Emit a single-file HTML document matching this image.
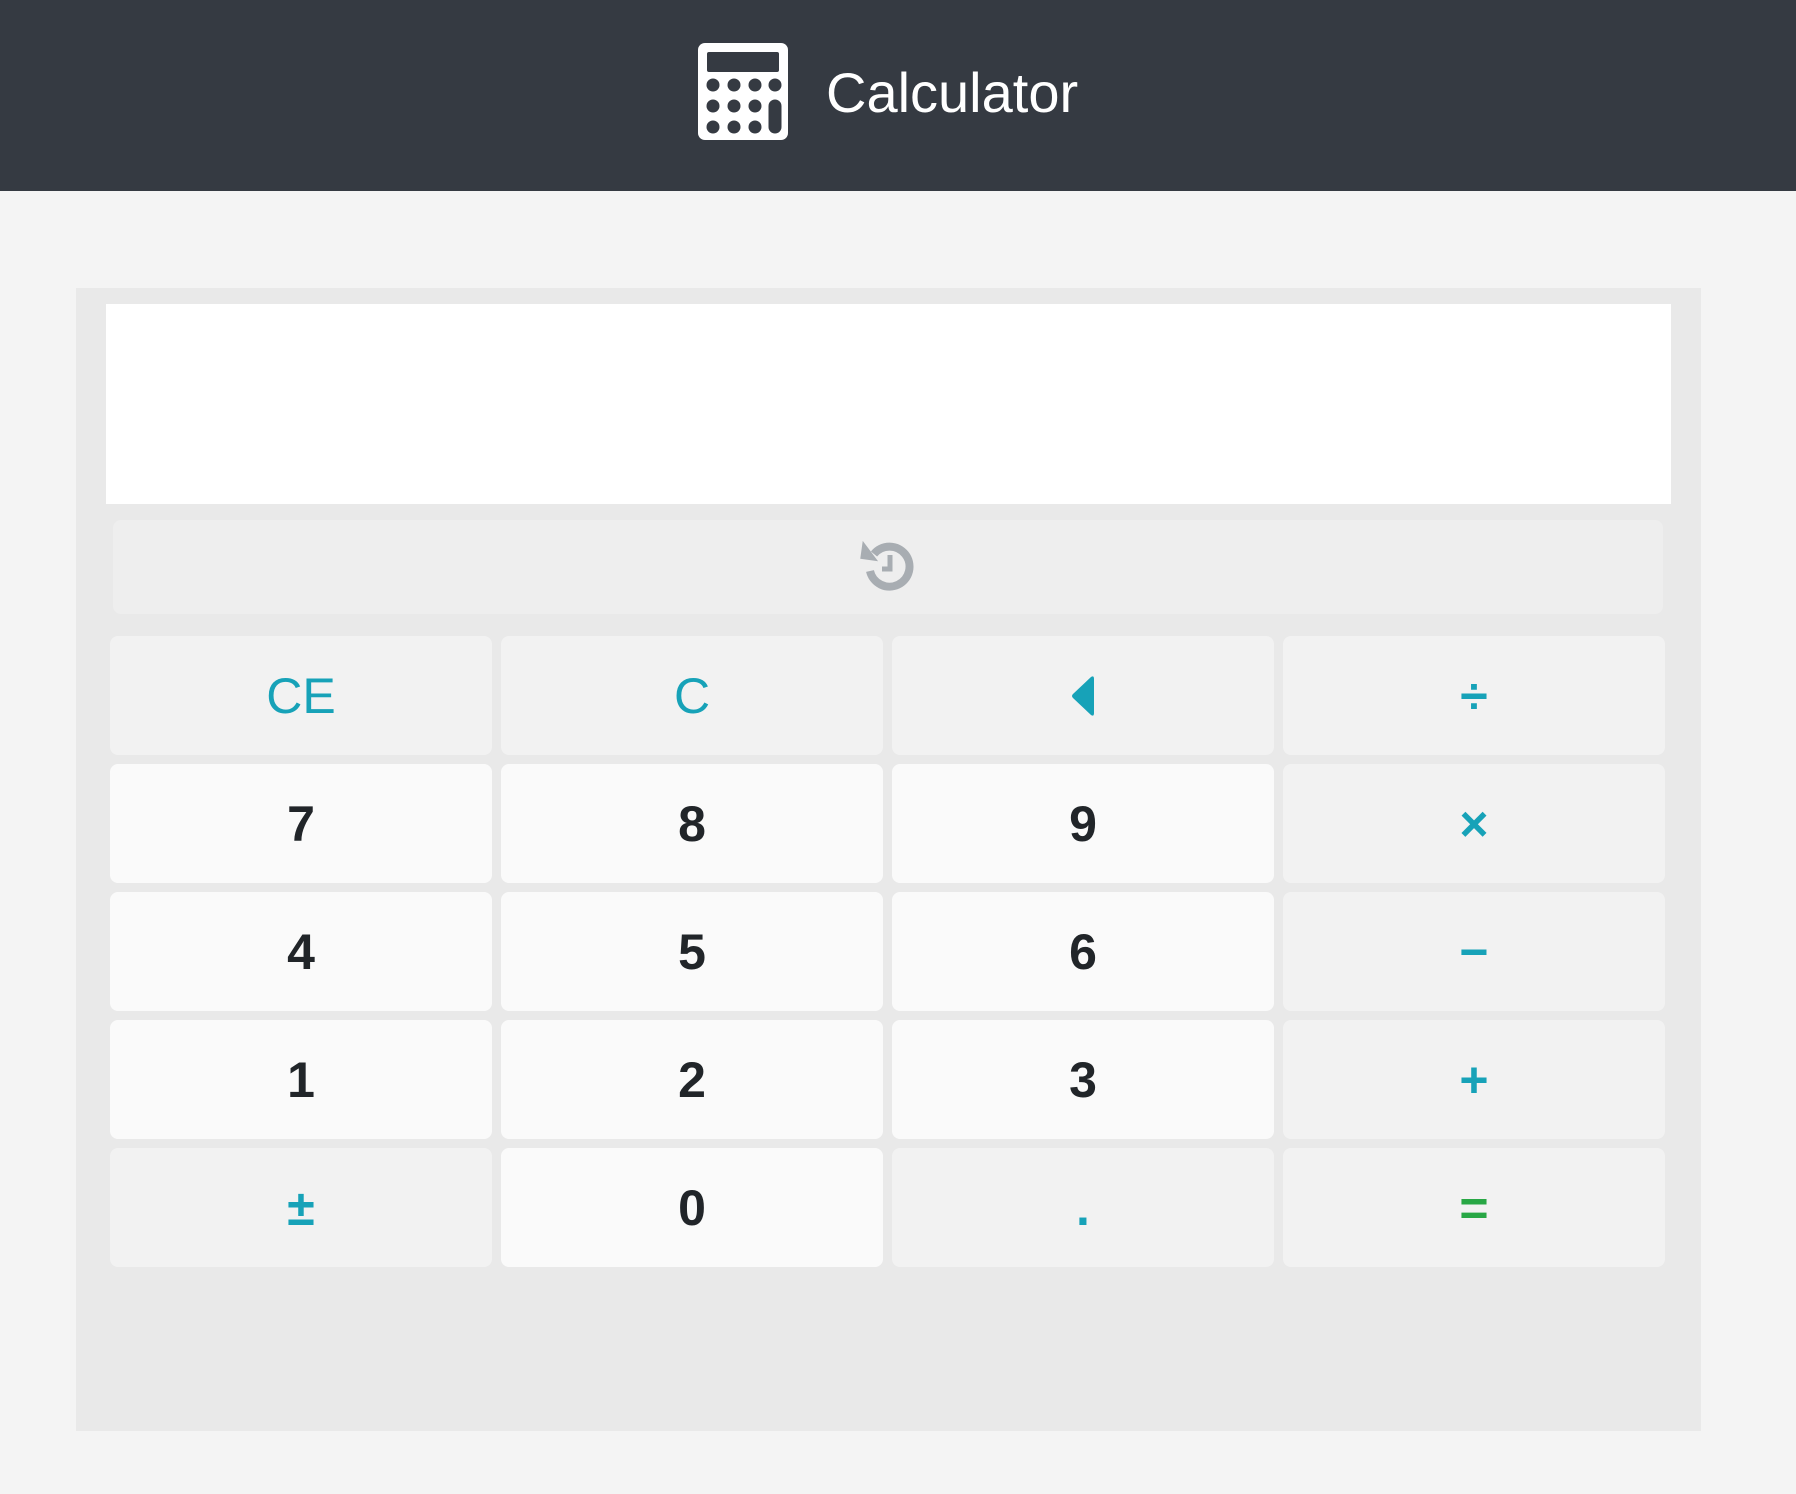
<!DOCTYPE html>
<html><head><meta charset="utf-8"><style>
*{margin:0;padding:0;box-sizing:border-box}
body{width:1796px;height:1494px;background:#f4f4f4;font-family:"Liberation Sans",Arial,sans-serif;position:relative;overflow:hidden}
.hdr{position:absolute;left:0;top:0;width:1796px;height:191px;background:#353a42}
.title{position:absolute;left:826px;top:58px;font-size:56px;color:#fff;line-height:70px}
.panel{position:absolute;left:76px;top:288px;width:1625px;height:1143px;background:#e9e9e9}
.disp{position:absolute;left:106px;top:304px;width:1565px;height:200px;background:#fff}
.hist{position:absolute;left:113px;top:520px;width:1550px;height:94px;background:#eeeeee;border-radius:8px}
.b{position:absolute;width:382px;height:119px;border-radius:8px;background:#f2f2f2;display:flex;align-items:center;justify-content:center;font-size:50px;color:#17a2b8}
.d{background:#fafafa;color:#212529;font-weight:bold}
.o{font-weight:bold}
</style></head><body>
<div class="hdr">
<svg style="position:absolute;left:698px;top:43px" width="90" height="97" viewBox="0 0 90 97">
<rect x="0" y="0" width="90" height="97" rx="7" fill="#fff"/>
<rect x="9" y="9" width="72" height="20" rx="2" fill="#353a42"/>
<g fill="#353a42">
<circle cx="15" cy="42" r="6.5"/><circle cx="36" cy="42" r="6.5"/><circle cx="57" cy="42" r="6.5"/><circle cx="77" cy="42" r="6.5"/>
<circle cx="15" cy="63" r="6.5"/><circle cx="36" cy="63" r="6.5"/><circle cx="57" cy="63" r="6.5"/>
<circle cx="15" cy="84" r="6.5"/><circle cx="36" cy="84" r="6.5"/><circle cx="57" cy="84" r="6.5"/>
<rect x="70.5" y="56.5" width="13" height="34" rx="6.5"/>
</g></svg>
<div class="title">Calculator</div>
</div>
<div class="panel"></div>
<div class="disp"></div>
<div class="hist">
<svg style="position:absolute;left:747px;top:18px" width="58" height="58" viewBox="0 0 58 58">
<path d="M10 33 A20 20 0 1 0 14 16" fill="none" stroke="#a8adb2" stroke-width="8"/>
<path d="M1 4 L1 22 L19 22 Z" fill="#a8adb2" transform="rotate(8 10 16)"/>
<path d="M30 17 V31 H22" fill="none" stroke="#a8adb2" stroke-width="5"/>
</svg>
</div>
<div class="b" style="left:110px;top:636px">CE</div>
<div class="b" style="left:501px;top:636px">C</div>
<div class="b" style="left:892px;top:636px"><svg width="26" height="42" viewBox="0 0 26 42"><path d="M21 2 Q24 0 24 4 V38 Q24 42 21 40 L3 23 Q1 21 3 19 Z" fill="#17a2b8"/></svg></div>
<div class="b o" style="left:1283px;top:636px">÷</div>
<div class="b d" style="left:110px;top:764px">7</div>
<div class="b d" style="left:501px;top:764px">8</div>
<div class="b d" style="left:892px;top:764px">9</div>
<div class="b o" style="left:1283px;top:764px">×</div>
<div class="b d" style="left:110px;top:892px">4</div>
<div class="b d" style="left:501px;top:892px">5</div>
<div class="b d" style="left:892px;top:892px">6</div>
<div class="b o" style="left:1283px;top:892px">−</div>
<div class="b d" style="left:110px;top:1020px">1</div>
<div class="b d" style="left:501px;top:1020px">2</div>
<div class="b d" style="left:892px;top:1020px">3</div>
<div class="b o" style="left:1283px;top:1020px">+</div>
<div class="b o" style="left:110px;top:1148px">±</div>
<div class="b d" style="left:501px;top:1148px">0</div>
<div class="b o" style="left:892px;top:1148px">.</div>
<div class="b o" style="left:1283px;top:1148px;color:#28a745">=</div>
</body></html>
